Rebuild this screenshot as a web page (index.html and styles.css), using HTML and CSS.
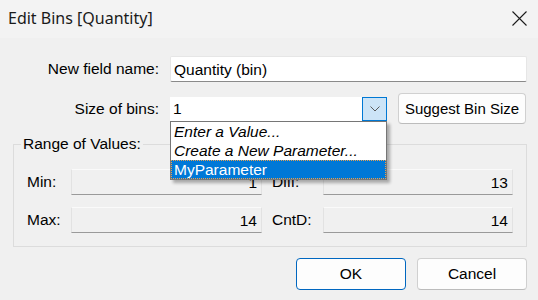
FILE: index.html
```html
<!DOCTYPE html>
<html lang="en">
<head>
    <meta charset="UTF-8">
    <title>Edit Bins [Quantity]</title>
    <link rel="stylesheet" href="styles.css">
</head>
<body>

<div class="dialog">
    <!-- Title bar -->
    <div class="titlebar">
        <span class="title">Edit Bins [Quantity]</span>
        <svg class="close" width="15" height="15" viewBox="0 0 15 15">
            <path d="M0.5 0.5 L14.5 14.5 M14.5 0.5 L0.5 14.5" stroke="#1b1b1b" stroke-width="1.1" fill="none"/>
        </svg>
    </div>

    <div class="content">
        <div class="form-row">
            <label class="label" for="fieldName">New field name:</label>
            <div class="textbox" id="fieldName">Quantity (bin)</div>
        </div>

        <div class="form-row">
            <label class="label" for="binSize">Size of bins:</label>
            <div class="bin-controls">
                <div class="combo" id="binSize">
                    <span class="combo-text">1</span>
                    <span class="combo-btn">
                        <svg width="10" height="6" viewBox="0 0 10 6">
                            <path d="M0.5 0.5 L5 5 L9.5 0.5" stroke="#5a5a5a" stroke-width="1" fill="none"/>
                        </svg>
                    </span>
                    <!-- Open dropdown list -->
                    <ul class="combo-list">
                        <li class="italic">Enter a Value...</li>
                        <li class="italic">Create a New Parameter...</li>
                        <li class="selected">MyParameter</li>
                    </ul>
                </div>
                <button class="btn suggest">Suggest Bin Size</button>
            </div>
        </div>

        <!-- Range of values -->
        <fieldset class="range">
            <legend>Range of Values:</legend>
            <div class="range-grid">
                <span class="range-label">Min:</span>
                <div class="readonly">1</div>
                <span class="range-label right">Diff:</span>
                <div class="readonly">13</div>

                <span class="range-label">Max:</span>
                <div class="readonly">14</div>
                <span class="range-label right">CntD:</span>
                <div class="readonly">14</div>
            </div>
        </fieldset>

        <div class="actions">
            <button class="btn default">OK</button>
            <button class="btn">Cancel</button>
        </div>
    </div>
</div>

</body>
</html>
```

FILE: styles.css
```css
body {
    margin: 0;
    padding: 0;
    background-color: #f0f0f0;
    font-family: "Liberation Sans", Arial, sans-serif;
    font-size: 15.5px;
    color: #000;
}
.dialog {
    width: 538px;
    height: 300px;
    overflow: hidden;
}
.titlebar {
    height: 38px;
    background-color: #f3f3f3;
    display: flex;
    align-items: center;
    justify-content: space-between;
    padding: 0 11px 0 8px;
}
.title {
    font-family: "Noto Sans", sans-serif;
    font-size: 16px;
    color: #1a1a1a;
    margin-top: -2px;
}
.close {
    margin-top: -2px;
}
.content {
    padding: 18px 11px 0 0;
}
.form-row {
    display: grid;
    grid-template-columns: 159px 1fr;
    column-gap: 11px;
    align-items: center;
    margin-bottom: 11px;
}
.label {
    text-align: right;
}
.textbox {
    height: 26px;
    line-height: 26px;
    background-color: #fff;
    border: 1px solid #e6e6e6;
    border-bottom-color: #8a8a8a;
    border-radius: 2px;
    padding: 0 3px;
    box-sizing: border-box;
}
.bin-controls {
    display: flex;
    align-items: center;
    gap: 11px;
}
.combo {
    position: relative;
    width: 217px;
    height: 24px;
    background-color: #fff;
    display: flex;
    align-items: stretch;
}
.combo-text {
    flex: 1;
    line-height: 24px;
    padding-left: 3px;
}
.combo-btn {
    width: 23px;
    background-color: #cce4f7;
    border: 1px solid #0078d4;
    display: flex;
    align-items: center;
    justify-content: center;
}
.combo-list {
    position: absolute;
    left: 0;
    top: 24px;
    width: 217px;
    margin: 0;
    padding: 0;
    list-style: none;
    background-color: #fff;
    border: 1px solid #767676;
    box-sizing: border-box;
    box-shadow: 3px 3px 3px rgba(0, 0, 0, 0.3);
    z-index: 2;
}
.combo-list li {
    height: 19px;
    line-height: 19px;
    padding-left: 3px;
}
.combo-list .italic {
    font-style: italic;
}
.combo-list .selected {
    background-color: #0078d7;
    color: #fff;
    outline: 1px dotted #e8a050;
    outline-offset: -1px;
}
.btn {
    font-family: "Liberation Sans", Arial, sans-serif;
    font-size: 15.5px;
    color: #000;
    background-color: #fdfdfd;
    border: 1px solid #d0d0d0;
    border-bottom-color: #bcbcbc;
    border-radius: 4px;
    height: 31px;
    padding: 0;
    white-space: nowrap;
}
.suggest {
    width: 128px;
    font-size: 15px;
}
.btn.default {
    border: 1px solid #0067c0;
}
.range {
    margin: 10px 0 0 13px;
    padding: 0 0 12px 13px;
    border: 1px solid #dcdcdc;
    height: 112px;
    box-sizing: border-box;
}
.range legend {
    padding: 0 2px;
    margin-left: -6px;
}
.range-grid {
    display: grid;
    grid-template-columns: 44px 191px 61px 190px;
    row-gap: 12px;
    align-items: center;
    margin-top: 16px;
}
.range-label.right {
    padding-left: 10px;
}
.readonly {
    height: 26px;
    line-height: 26px;
    text-align: right;
    padding-right: 4px;
    border: 1px solid #e2e2e2;
    border-top-color: #fafafa;
    border-bottom-color: #9a9a9a;
    box-sizing: border-box;
    background-color: #f0f0f0;
}
.actions {
    display: flex;
    justify-content: flex-end;
    gap: 11px;
    margin-top: 11px;
}
.actions .btn {
    width: 110px;
    height: 32px;
}
```
